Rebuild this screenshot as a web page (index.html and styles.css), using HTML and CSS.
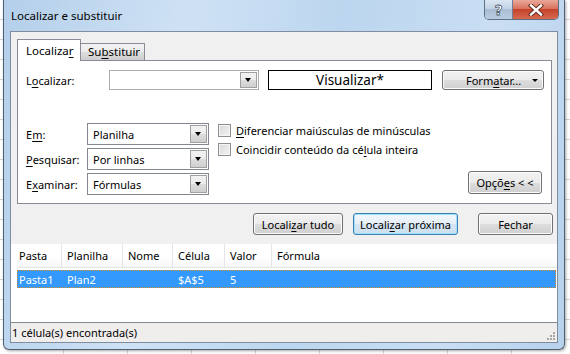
FILE: index.html
```html
<!DOCTYPE html>
<html lang="pt">
<head>
  <meta charset="UTF-8">
  <title>Localizar e substituir</title>
  <link rel="stylesheet" href="styles.css">
</head>
<body>
  <div class="desk">
    <div class="window">
      <div class="titlebar">
        <span class="title">Localizar e substituir</span>
        <div class="caption-btns">
          <span class="cap-help">?</span>
          <span class="cap-close">
            <svg width="16" height="12" viewBox="0 0 16 12">
              <path d="M3 1.5 L13 10.5 M13 1.5 L3 10.5" stroke="#5a2a22" stroke-width="4.2" stroke-linecap="square"/>
              <path d="M3 1.5 L13 10.5 M13 1.5 L3 10.5" stroke="#fff" stroke-width="2.4" stroke-linecap="square"/>
            </svg>
          </span>
        </div>
      </div>

      <div class="client">
        <div class="tabs">
          <div class="tab active">Localiza<u>r</u></div>
          <div class="tab">Su<u>b</u>stituir</div>
        </div>

        <div class="panel">
          <div class="find-row">
            <span class="lbl-find">L<u>o</u>calizar:</span>
            <div class="combo combo-find"><span class="combo-text"></span><span class="drop"></span></div>
            <div class="preview">Visualizar*</div>
            <div class="btn btn-format"><span>Form<u>a</u>tar...</span><span class="mini-arrow"></span></div>
          </div>

          <div class="options">
            <div class="opt-grid">
              <span class="lbl">E<u>m</u>:</span>
              <div class="combo"><span class="combo-text">Planilha</span><span class="drop"></span></div>
              <span class="lbl"><u>P</u>esquisar:</span>
              <div class="combo"><span class="combo-text">Por linhas</span><span class="drop"></span></div>
              <span class="lbl">E<u>x</u>aminar:</span>
              <div class="combo"><span class="combo-text">Fórmulas</span><span class="drop"></span></div>
            </div>
            <div class="opt-right">
              <div class="check-row"><span class="checkbox"></span><span><u>D</u>iferenciar maiúsculas de minúsculas</span></div>
              <div class="check-row"><span class="checkbox"></span><span>Coincidir conteúdo da cé<u>l</u>ula inteira</span></div>
              <div class="btn btn-options">Opçõ<u>e</u>s &lt; &lt;</div>
            </div>
          </div>
        </div>

        <div class="actions">
          <div class="btn btn-all">Locali<u>z</u>ar tudo</div>
          <div class="btn btn-next">Locali<u>z</u>ar próxima</div>
          <div class="btn btn-close">Fechar</div>
        </div>

        <div class="results">
          <div class="list-head">
            <span class="col c-pasta">Pasta</span>
            <span class="col c-plan">Planilha</span>
            <span class="col c-nome">Nome</span>
            <span class="col c-cel">Célula</span>
            <span class="col c-val">Valor</span>
            <span class="col c-form">Fórmula</span>
          </div>
          <div class="list-row selected">
            <span class="col c-pasta">Pasta1</span>
            <span class="col c-plan">Plan2</span>
            <span class="col c-nome"></span>
            <span class="col c-cel">$A$5</span>
            <span class="col c-val">5</span>
            <span class="col c-form"></span>
          </div>
        </div>

        <div class="statusbar">
          <span>1 célula(s) encontrada(s)</span>
          <svg class="grip" width="10" height="10" viewBox="0 0 10 10">
            <g fill="#a7a7a7">
              <rect x="7" y="1" width="2" height="2"/>
              <rect x="4" y="4" width="2" height="2"/>
              <rect x="7" y="4" width="2" height="2"/>
              <rect x="1" y="7" width="2" height="2"/>
              <rect x="4" y="7" width="2" height="2"/>
              <rect x="7" y="7" width="2" height="2"/>
            </g>
          </svg>
        </div>
      </div>
    </div>
  </div>
</body>
</html>
```

FILE: styles.css
```css
* {
  box-sizing: border-box;
}

body {
  margin: 0;
  width: 570px;
  height: 354px;
  overflow: hidden;
  font-family: 'Noto Sans', 'Open Sans', sans-serif;
  font-size: 11px;
  color: #000;
  background-color: #fff;
  background-image:
    linear-gradient(90deg, transparent 63px, #d4d4d4 63px),
    linear-gradient(transparent 19px, #d4d4d4 19px);
  background-size: 64px 100%, 100% 20px;
}

u {
  text-decoration: underline;
  text-underline-offset: 2px;
}

.desk {
  padding-left: 3px;
}

.window {
  width: 562px;
  height: 350px;
  display: flex;
  flex-direction: column;
  padding: 0 6px 6px;
  border: 1px solid #4f6074;
  border-top: none;
  border-radius: 0 0 6px 6px;
  background: linear-gradient(100deg, #b4cfea 0%, #cfe2f5 30%, #bcd6ef 55%, #c9def3 80%, #b7d1ec 100%);
  box-shadow: 1px 1px 3px rgba(0,0,0,0.35);
}

/* title bar */

.titlebar {
  height: 31px;
  display: flex;
  justify-content: space-between;
  align-items: flex-start;
}

.title {
  margin-top: 8px;
  padding-left: 1px;
  font-size: 11.5px;
  color: #000;
}

.caption-btns {
  display: flex;
  margin-right: -1px;
  height: 20px;
  border: 1px solid #5e6f83;
  border-top: none;
  border-radius: 0 0 5px 5px;
  overflow: hidden;
}

.cap-help {
  width: 28px;
  display: flex;
  align-items: center;
  justify-content: center;
  font-family: 'DejaVu Sans', sans-serif;
  font-weight: bold;
  font-size: 14px;
  color: #fff;
  -webkit-text-stroke: 0.8px #4c5b6c;
  background: linear-gradient(#dbe6f2, #c2d3e5 45%, #a9bdd3 50%, #b8cde1);
  border-right: 1px solid #6d7f94;
}

.cap-close {
  width: 45px;
  display: flex;
  align-items: center;
  justify-content: center;
  background: linear-gradient(#e9a99a, #d9725e 45%, #c7432c 50%, #d6694f);
}

/* client area */

.client {
  flex: 1;
  display: flex;
  flex-direction: column;
  border: 1px solid #7f8da0;
  background: #f0f0f0;
}

.tabs {
  display: flex;
  align-items: flex-end;
  height: 21px;
  margin-top: 7px;
  padding-left: 6px;
  font-size: 11.5px;
}

.tab {
  width: 65px;
  height: 17px;
  margin-left: -1px;
  padding-left: 7px;
  line-height: 16px;
  border: 1px solid #898c95;
  border-bottom: none;
  background: linear-gradient(#f2f2f2, #ebebeb 50%, #dddddd 51%, #cfcfcf);
}

.tab.active {
  width: 64px;
  height: 22px;
  margin-left: 0;
  margin-bottom: -1px;
  padding-left: 8px;
  line-height: 22px;
  background: #fff;
  position: relative;
  z-index: 1;
}

.panel {
  width: 535px;
  height: 144px;
  margin-left: 6px;
  padding: 9px 0 0 8px;
  border: 1px solid #898c95;
  background: #fff;
}

.find-row {
  display: flex;
  align-items: center;
  height: 20px;
}

.lbl-find {
  width: 83px;
}

.combo {
  display: flex;
  align-items: center;
  justify-content: space-between;
  height: 22px;
  padding: 1px 1px 1px 5px;
  border: 1px solid #828790;
  background: #fff;
}

.combo-find {
  width: 150px;
  height: 20px;
  border-color: #abadb3;
}

.drop {
  width: 17px;
  height: 100%;
  border: 1px solid #a0a0a0;
  background: linear-gradient(#f2f2f2, #ebebeb 50%, #dddddd 51%, #cfcfcf);
  position: relative;
}

.drop::after {
  content: '';
  position: absolute;
  left: 4px;
  top: 50%;
  margin-top: -2px;
  border-left: 3.5px solid transparent;
  border-right: 3.5px solid transparent;
  border-top: 4px solid #000;
}

.preview {
  width: 164px;
  height: 20px;
  margin-left: 9px;
  border: 1px solid #000;
  text-align: center;
  font-size: 13.5px;
  line-height: 18px;
}

.btn {
  display: flex;
  align-items: center;
  justify-content: center;
  height: 22px;
  border: 1px solid #707070;
  border-radius: 3px;
  background: linear-gradient(#f2f2f2, #ebebeb 50%, #dddddd 51%, #cfcfcf);
  box-shadow: inset 0 0 0 1px #fcfcfc;
}

.btn-format {
  width: 102px;
  height: 20px;
  margin-left: 10px;
  padding-left: 23px;
  justify-content: space-between;
}

.mini-arrow {
  width: 0;
  height: 0;
  margin-right: 5px;
  border-left: 3px solid transparent;
  border-right: 3px solid transparent;
  border-top: 3px solid #000;
}

.options {
  display: flex;
  margin-top: 33px;
}

.opt-grid {
  display: grid;
  grid-template-columns: 61px 122px;
  grid-auto-rows: 22px;
  row-gap: 3px;
  align-items: center;
}

.opt-right {
  flex: 1;
  display: flex;
  flex-direction: column;
  margin-left: 9px;
  padding-top: 1px;
}

.check-row {
  display: flex;
  align-items: center;
  gap: 5px;
  height: 13px;
  margin-bottom: 6px;
}

.checkbox {
  width: 13px;
  height: 13px;
  border: 1px solid #8e8f8f;
  background: linear-gradient(135deg, #d9d9d9, #f4f4f4);
  box-shadow: inset 0 0 0 1px #f4f4f4;
}

.btn-options {
  width: 74px;
  height: 23px;
  margin-top: auto;
  margin-bottom: 1px;
  margin-right: 9px;
  align-self: flex-end;
}

/* buttons under the tabs */

.actions {
  display: flex;
  justify-content: flex-end;
  margin-top: 9px;
  padding-right: 4px;
}

.btn-all {
  width: 90px;
}

.btn-next {
  width: 105px;
  margin-left: 10px;
  border-color: #3c7fb1;
  box-shadow: inset 0 0 0 1px #9fe1fb;
  background: linear-gradient(#f2f7fb, #e6eff7 50%, #d6e5f1 51%, #cde0ef);
}

.btn-close {
  width: 75px;
  margin-left: 20px;
}

/* results list */

.results {
  height: 78px;
  margin-top: 9px;
  padding-left: 6px;
  background: #fff;
}

.list-head {
  display: flex;
  height: 24px;
  align-items: center;
  background: linear-gradient(#fff, #fff 50%, #f7f8fa);
  border-bottom: 1px solid #e5e5e5;
}

.list-head .col {
  height: 100%;
  line-height: 24px;
  border-right: 1px solid #e5e5e5;
}

.col {
  padding-left: 5px;
  white-space: nowrap;
}

.c-pasta { width: 45px; padding-left: 2px; }
.c-plan { width: 61px; }
.c-nome { width: 50px; }
.c-cel { width: 52px; }
.c-val { width: 47px; }
.c-form { flex: 1; border-right: none !important; }

.list-row {
  display: flex;
  height: 18px;
  margin-top: 2px;
  align-items: center;
  margin-right: 1px;
}

.list-row.selected {
  background: #3399ff;
  color: #fff;
  outline: 1px dotted #d98b2a;
  outline-offset: -1px;
}

.statusbar {
  flex: 1;
  display: flex;
  justify-content: space-between;
  align-items: center;
  padding-left: 1px;
  border-top: 1px solid #828790;
  background: #f0eded;
}

.grip {
  align-self: flex-end;
  margin-right: 1px;
  margin-bottom: 1px;
}
```
